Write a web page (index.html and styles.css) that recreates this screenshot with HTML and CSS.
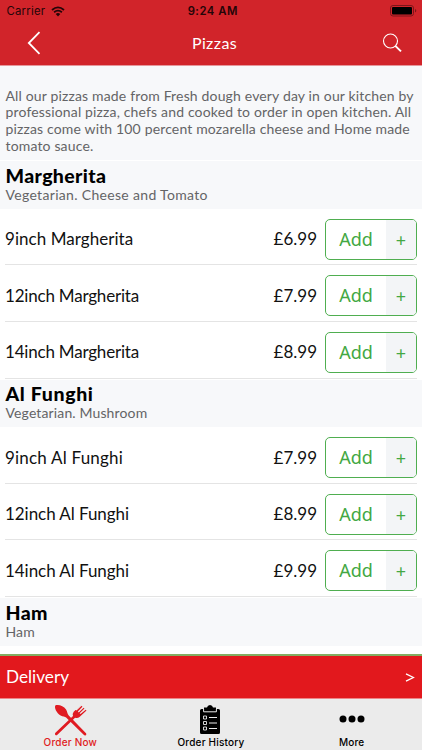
FILE: index.html
```
<!DOCTYPE html>
<html lang="en">
<head>
<meta charset="utf-8">
<title>Pizzas</title>
<link rel="stylesheet" href="styles.css">
</head>
<body>
<header class="header">
  <div class="status">
    <span class="carrier">Carrier
      <svg class="wifi" width="14" height="11" viewBox="0 0 14 11"><path d="M1 4Q7-1.3 13 4M3.1 6.3Q7 3 10.9 6.3" fill="none" stroke="#240508" stroke-width="1.8"/><path d="M4.7 8Q7 6.1 9.3 8L7 10.4Z" fill="#240508"/></svg>
    </span>
    <span class="time">9:24 AM</span>
    <svg class="battery" width="27" height="12" viewBox="0 0 27 12"><rect x=".5" y=".5" width="23" height="10.5" rx="2.5" fill="none" stroke="#7d151a"/><rect x="2" y="2" width="20" height="7.5" rx="1" fill="#000"/><path d="M25 4v3.6q1.3-.5 1.3-1.8T25 4" fill="#7d151a"/></svg>
  </div>
  <nav class="nav">
    <svg class="back" width="14" height="24" viewBox="0 0 14 24"><path d="M12.5 1.2L1.8 12l10.7 10.8" fill="none" stroke="#fff" stroke-width="1.8"/></svg>
    <h1 class="title">Pizzas</h1>
    <svg class="search" width="20" height="20" viewBox="0 0 20 20"><circle cx="8.500" cy="8" r="7" fill="none" stroke="#fff" stroke-width="1.1"/><path d="M13.300 12.900L19 18.400" stroke="#fff" stroke-width="2"/></svg>
  </nav>
</header>
<main class="menu">
  <p class="intro">All our pizzas made from Fresh dough every day in our kitchen by<br>professional pizza, chefs and cooked to order in open kitchen. All<br>pizzas come with 100 percent mozarella cheese and Home made<br>tomato sauce.</p>
  <section class="group">
    <div class="group-head"><h2>Margherita</h2><p class="wide">Vegetarian. Cheese and Tomato</p></div>
    <div class="row"><span class="name">9inch Margherita</span><span class="price">£6.99</span><button class="add"><span>Add</span><i>+</i></button></div>
    <div class="row"><span class="name twelve">12inch Margherita</span><span class="price">£7.99</span><button class="add"><span>Add</span><i>+</i></button></div>
    <div class="row"><span class="name twelve">14inch Margherita</span><span class="price">£8.99</span><button class="add"><span>Add</span><i>+</i></button></div>
  </section>
  <section class="group">
    <div class="group-head"><h2 class="funghi">Al Funghi</h2><p>Vegetarian. Mushroom</p></div>
    <div class="row"><span class="name plain">9inch Al Funghi</span><span class="price">£7.99</span><button class="add"><span>Add</span><i>+</i></button></div>
    <div class="row"><span class="name funghi-name">12inch Al Funghi</span><span class="price">£8.99</span><button class="add"><span>Add</span><i>+</i></button></div>
    <div class="row"><span class="name funghi-name">14inch Al Funghi</span><span class="price">£9.99</span><button class="add"><span>Add</span><i>+</i></button></div>
  </section>
  <section class="group">
    <div class="group-head"><h2>Ham</h2><p>Ham</p></div>
  </section>
</main>
<div class="delivery"><span>Delivery</span><svg width="10" height="10" viewBox="0 0 10 10"><path d="M1 1.800L8.400 5.500 1 9.200" fill="none" stroke="#fff" stroke-width="1.3"/></svg></div>
<footer class="tabs">
  <div class="tab active">
    <svg class="cutlery" width="33" height="32" viewBox="0 0 34 34" preserveAspectRatio="none"><g fill="#e01b22"><path d="M1.300 1.500C4.500.1 9.800 1.800 12.400 5.800c1.600 2.800 1.300 4.800 2.800 6.400L33 31q.9 1.200-.2 2.100-1.100.7-2.200-.3L12.500 14.400c-1.200-1.300-3.300-1-5.700-2.300C2.500 9.600.2 3.800 1.300 1.500Z"/><path d="M27.300 1.300L20.300 8.300q-1.600 2.200-.7 4.400L1.200 30.800q-.7 1.300.3 2.200 1 .7 2-.3L21.700 14.500q2.400 1.100 4.600-.7l7.200-6.900-.8-.8-5.400 4.500-.9-.8 5-5-.9-.9-5 5-.9-.8 4.700-5.300-.9-.9-5.200 5-.8-.8 5.100-5z"/></g></svg>
    <span>Order Now</span>
  </div>
  <div class="tab">
    <svg class="clipboard" width="22" height="32" viewBox="0 0 22 32"><path d="M2.500 6H5V4.500h3Q8.500 2 11 2t3 2.500h3V6h2.500q1.500 0 1.500 1.500v22q0 1.500-1.500 1.500h-17Q1 31 1 29.500v-22Q1 6 2.500 6Z"/><g fill="none" stroke="#ebebeb"><path d="M4.600 6v2.800h12.800V6M10 14.500h8M10 20h8M10 25.500h8"/><path d="M4.500 13h3v3h-3zM4.500 18.500h3v3h-3zM4.500 24h3v3h-3z" stroke-width=".9"/></g></svg>
    <span>Order History</span>
  </div>
  <div class="tab">
    <svg class="dots" width="26" height="8" viewBox="0 0 26 8"><circle cx="4" cy="4" r="3.500"/><circle cx="13" cy="4" r="3.500"/><circle cx="22" cy="4" r="3.500"/></svg>
    <span>More</span>
  </div>
</footer>
</body>
</html>
```
FILE: styles.css
```
* { box-sizing: border-box; }
body { margin: 0; width: 422px; height: 750px; overflow: hidden; display: flex; flex-direction: column; background: #fff; font-family: Lato, "Liberation Sans", sans-serif; color: #111; }
h1, h2, p { margin: 0; }
svg { display: block; }
.header { height: 66px; flex: none; background: #d1242a; border-bottom: 1px solid #e5979b; }
.status { height: 22px; display: grid; grid-template-columns: 1fr auto 1fr; align-items: center; padding: 0 5px 0 6.500px; font: 11.300px Inter, sans-serif; color: #240508; }
.carrier { display: flex; align-items: center; gap: 6px; letter-spacing: .25px; }
.time { font-weight: 600; letter-spacing: .5px; padding-left: 2px; }
.battery { justify-self: end; }
.nav { height: 43px; display: grid; grid-template-columns: 1fr auto 1fr; align-items: center; padding: 0 20px 0 27px; }
.back { margin-top: -2px; }
.title { font-size: 16px; line-height: 20px; font-weight: 400; color: #fff; letter-spacing: .4px; padding-bottom: 2px; }
.search { justify-self: end; margin-top: -2px; }
.menu { height: 588px; flex: none; overflow: hidden; }
.intro { height: 94px; background: #f7f8fa; padding: 21.500px 0 0 5.500px; font-size: 14px; line-height: 16.900px; color: #646466; white-space: nowrap; letter-spacing: .155px; }
.group { padding-top: 1.300px; height: 218.500px; }
.group-head { height: 47.500px; background: #f7f8fa; padding: 2.500px 0 0 5.500px; }
.group-head h2 { font-size: 19.500px; line-height: 23px; font-weight: 900; color: #000; letter-spacing: .35px; }
.group-head .funghi { letter-spacing: .65px; }
.group-head p { font-size: 14px; line-height: 15px; color: #646466; letter-spacing: .13px; }
.group-head .wide { letter-spacing: .32px; }
.row { height: 56.600px; margin: 0 5px; border-bottom: 1px solid #e4e4e4; display: flex; align-items: center; padding-top: 5px; }
.name { flex: 1; font-size: 17px; letter-spacing: .05px; padding-bottom: 1px; }
.twelve { letter-spacing: -.2px; }
.plain { letter-spacing: .2px; }
.funghi-name { letter-spacing: -.05px; }
.price { font-size: 17px; margin-right: 8px; padding-bottom: 1px; }
.add { width: 92px; height: 41px; padding: 0; display: flex; overflow: hidden; background: #fff; border: 1.300px solid #4fae50; border-radius: 5px; color: #43a843; font: 18px "Noto Sans", sans-serif; }
.add span { width: 60px; line-height: 39px; text-align: center; }
.add i { flex: 1; background: #f3f5f7; font-style: normal; line-height: 40px; text-align: center; }
.delivery { height: 45px; flex: none; background: #e2181d; border-top: 2px solid #83ad62; border-bottom: 1px solid #ed8588; color: #fff; display: flex; align-items: center; justify-content: space-between; padding: 0 7px 0 6px; font-size: 17.200px; }
.delivery span { padding-bottom: 2px; }
.tabs { height: 51px; flex: none; background: #ebebeb; display: grid; grid-template-columns: repeat(3, 1fr); font: 500 10px Inter, sans-serif; color: #000; }
.tab { display: grid; grid-template-rows: 38px 13px; justify-items: center; align-items: center; line-height: 12px; }
.tab span { letter-spacing: .2px; margin-top: -3px; }
.tab .cutlery { margin-top: 4px; }
.tab .clipboard { margin: 2px 1px 0 0; }
.tab .dots { margin-top: 2px; }
.active { color: #e01b22; }
```
